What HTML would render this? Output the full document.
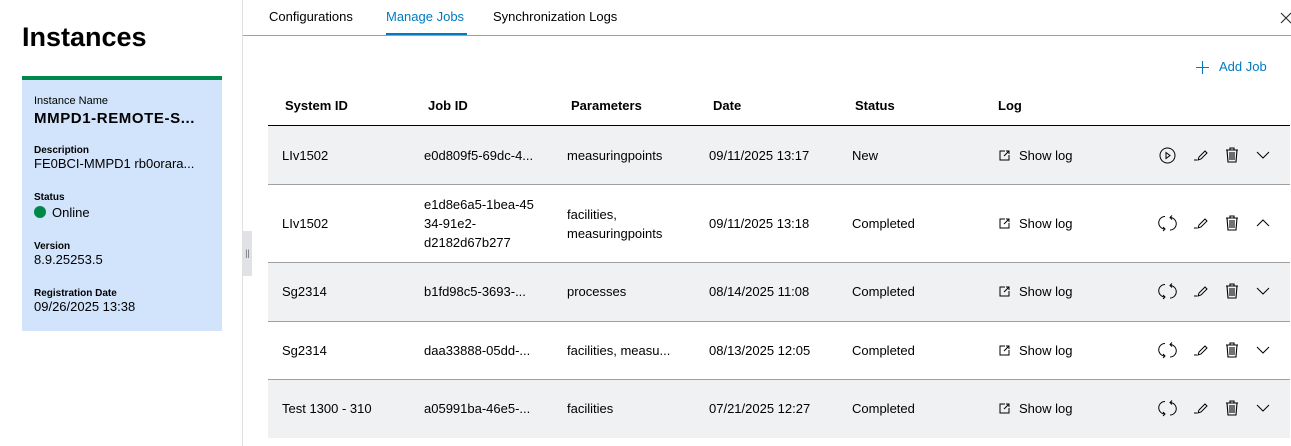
<!DOCTYPE html>
<html><head><meta charset="utf-8"><style>
*{box-sizing:border-box;margin:0;padding:0}
body{width:1291px;height:446px;background:#fff;font-family:"Liberation Sans",sans-serif;color:#000;position:relative;overflow:hidden;font-size:14px}
.abs{position:absolute}
h1{position:absolute;left:22px;top:22px;font-size:27px;font-weight:bold}
.card{position:absolute;left:22px;top:76px;width:200px;height:255px;background:#d1e4fc;border-top:4px solid #00884a;padding:12px 0 0 12px}
.lbl{font-size:11px}
.b{font-weight:bold}
.val{font-size:13px}
.sec{margin-top:21px;font-size:10px;font-weight:bold}
.tab{position:absolute;top:9px;font-size:13px}
.row{position:absolute;left:268px;width:1022px;border-bottom:1px solid #a0a0a0}
.g{background:#eff1f2}
.c{position:absolute;font-size:13px;line-height:19px}
.hd{position:absolute;top:98px;font-size:13px;font-weight:bold}
svg{position:absolute}
</style></head><body>
<h1>Instances</h1>
<div class="card">
<div class="lbl" style="margin-top:3px">Instance Name</div>
<div class="b" style="font-size:15px;margin-top:3px;letter-spacing:.6px">MMPD1-REMOTE-S...</div>
<div class="sec" style="margin-top:18px">Description</div>
<div class="val">FE0BCI-MMPD1 rb0orara...</div>
<div class="sec">Status</div>
<div class="val" style="margin-top:2px"><span style="display:inline-block;width:12px;height:12px;border-radius:50%;background:#00884a;vertical-align:-1px;margin-right:6px"></span>Online</div>
<div class="sec">Version</div>
<div class="val">8.9.25253.5</div>
<div class="sec">Registration Date</div>
<div class="val">09/26/2025 13:38</div>
</div>
<div class="abs" style="left:242px;top:0;width:1px;height:446px;background:#e0e0e0"></div>
<div class="abs" style="left:243px;top:231px;width:9px;height:45px;background:#e0e2e5;font-size:9px;color:#666;text-align:center;line-height:45px">||</div>
<div class="abs" style="left:243px;top:35px;width:1048px;height:1px;background:#a0a0a0"></div>
<div class="tab" style="left:269px">Configurations</div>
<div class="tab" style="left:386px;color:#007bc0">Manage Jobs</div>
<div class="abs" style="left:386px;top:33px;width:81px;height:2px;background:#007bc0"></div>
<div class="tab" style="left:493px">Synchronization Logs</div>
<svg style="left:1280px;top:12px" width="12" height="12"><path d="M1 1l10 10M11 1L1 11" stroke="#333" stroke-width="1.2"/></svg>
<svg style="left:1196px;top:61px" width="13" height="13"><path d="M6.5 0v13M0 6.5h13" stroke="#007bc0" stroke-width="1.1"/></svg>
<div class="abs" style="left:1219px;top:59px;font-size:13px;color:#007bc0">Add Job</div>
<div class="hd" style="left:285px">System ID</div>
<div class="hd" style="left:428px">Job ID</div>
<div class="hd" style="left:571px">Parameters</div>
<div class="hd" style="left:713px">Date</div>
<div class="hd" style="left:855px">Status</div>
<div class="hd" style="left:998px">Log</div>
<div class="abs" style="left:268px;top:125px;width:1022px;height:1px;background:#000"></div>

<div class="row g" style="top:126px;height:59px"></div>
<div class="row" style="top:185px;height:78px"></div>
<div class="row g" style="top:263px;height:59px"></div>
<div class="row" style="top:322px;height:58px"></div>
<div class="row g" style="top:380px;height:58px;border:none"></div>

<div class="c" style="left:282px;top:146px">LIv1502</div>
<div class="c" style="left:424px;top:146px">e0d809f5-69dc-4...</div>
<div class="c" style="left:567px;top:146px">measuringpoints</div>
<div class="c" style="left:709px;top:146px">09/11/2025 13:17</div>
<div class="c" style="left:852px;top:146px">New</div>

<div class="c" style="left:282px;top:214px">LIv1502</div>
<div class="c" style="left:424px;top:195px">e1d8e6a5-1bea-45<br>34-91e2-<br>d2182d67b277</div>
<div class="c" style="left:567px;top:205px">facilities,<br>measuringpoints</div>
<div class="c" style="left:709px;top:214px">09/11/2025 13:18</div>
<div class="c" style="left:852px;top:214px">Completed</div>

<div class="c" style="left:282px;top:282px">Sg2314</div>
<div class="c" style="left:424px;top:282px">b1fd98c5-3693-...</div>
<div class="c" style="left:567px;top:282px">processes</div>
<div class="c" style="left:709px;top:282px">08/14/2025 11:08</div>
<div class="c" style="left:852px;top:282px">Completed</div>

<div class="c" style="left:282px;top:341px">Sg2314</div>
<div class="c" style="left:424px;top:341px">daa33888-05dd-...</div>
<div class="c" style="left:567px;top:341px">facilities, measu...</div>
<div class="c" style="left:709px;top:341px">08/13/2025 12:05</div>
<div class="c" style="left:852px;top:341px">Completed</div>

<div class="c" style="left:282px;top:399px">Test 1300 - 310</div>
<div class="c" style="left:424px;top:399px">a05991ba-46e5-...</div>
<div class="c" style="left:567px;top:399px">facilities</div>
<div class="c" style="left:709px;top:399px">07/21/2025 12:27</div>
<div class="c" style="left:852px;top:399px">Completed</div>

<svg width="0" height="0"><defs>
<g id="ext"><path d="M7 2H2v9h9V6M6 7l5-5M8 2h3v3" fill="none" stroke="#000" stroke-width="1"/></g>
<g id="pen"><path d="M1 12h3M5 12l1-3 6-6 2 2-6 6z" fill="none" stroke="#000" stroke-width="1"/></g>
<g id="bin"><path d="M2 3h12M6 3V1h4v2M3 3l1 12h8l1-12M6 5v8M8 5v8M10 5v8" fill="none" stroke="#000" stroke-width="1.1"/></g>
<g id="dn"><path d="M1 4l6 6 6-6" fill="none" stroke="#000" stroke-width="1"/></g>
<g id="up"><path d="M1 10l6-6 6 6" fill="none" stroke="#000" stroke-width="1"/></g>
<g id="sync"><path d="M6 2.5A6 6 0 0 0 6 15M4 13l2 2-2 2M11 16A6 6 0 0 0 11 3.5M13 5.5l-2-2 2-2" fill="none" stroke="#000" stroke-width="1"/></g>
<g id="play"><circle cx="8.5" cy="8.5" r="7.5" fill="none" stroke="#000" stroke-width="1"/><path d="M7 5.5l4 3-4 3z" fill="none" stroke="#000" stroke-width="1"/></g>
</defs></svg>

<svg style="left:0;top:0" width="1291" height="446">
<g transform="translate(998,149)"><use href="#ext"/></g>
<g transform="translate(998,217)"><use href="#ext"/></g>
<g transform="translate(998,285)"><use href="#ext"/></g>
<g transform="translate(998,344)"><use href="#ext"/></g>
<g transform="translate(998,402)"><use href="#ext"/></g>
<g transform="translate(1159,147)"><use href="#play"/></g>
<g transform="translate(1159,214)"><use href="#sync"/></g>
<g transform="translate(1159,282)"><use href="#sync"/></g>
<g transform="translate(1159,341)"><use href="#sync"/></g>
<g transform="translate(1159,399)"><use href="#sync"/></g>
<g transform="translate(1193,148)"><use href="#pen"/></g>
<g transform="translate(1193,216)"><use href="#pen"/></g>
<g transform="translate(1193,284)"><use href="#pen"/></g>
<g transform="translate(1193,343)"><use href="#pen"/></g>
<g transform="translate(1193,401)"><use href="#pen"/></g>
<g transform="translate(1224,147)"><use href="#bin"/></g>
<g transform="translate(1224,215)"><use href="#bin"/></g>
<g transform="translate(1224,283)"><use href="#bin"/></g>
<g transform="translate(1224,342)"><use href="#bin"/></g>
<g transform="translate(1224,400)"><use href="#bin"/></g>
<g transform="translate(1256,148)"><use href="#dn"/></g>
<g transform="translate(1256,216)"><use href="#up"/></g>
<g transform="translate(1256,284)"><use href="#dn"/></g>
<g transform="translate(1256,343)"><use href="#dn"/></g>
<g transform="translate(1256,401)"><use href="#dn"/></g>
</svg>
<div class="c" style="left:1019px;top:146px">Show log</div>
<div class="c" style="left:1019px;top:214px">Show log</div>
<div class="c" style="left:1019px;top:282px">Show log</div>
<div class="c" style="left:1019px;top:341px">Show log</div>
<div class="c" style="left:1019px;top:399px">Show log</div>
</body></html>
